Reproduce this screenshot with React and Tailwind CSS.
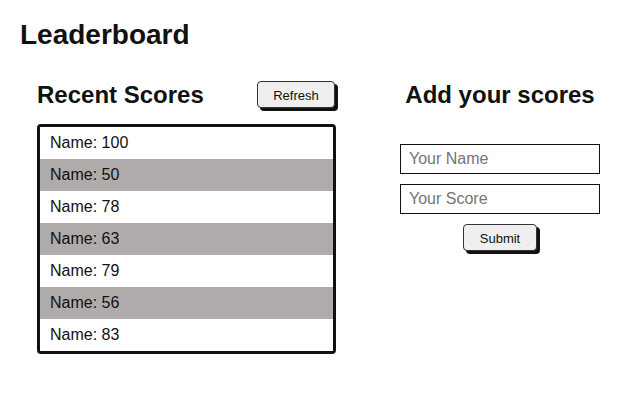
import React from 'react';

const scores = [
    { name: 'Name', score: 100 },
    { name: 'Name', score: 50 },
    { name: 'Name', score: 78 },
    { name: 'Name', score: 63 },
    { name: 'Name', score: 79 },
    { name: 'Name', score: 56 },
    { name: 'Name', score: 83 },
];

const App = () => {
    return (
        <div className="min-h-[415px] bg-white text-[#111] font-['Liberation_Sans',Arial,sans-serif] pl-5 pt-[19px]">
            <h1 className="text-[28px] leading-[32px] font-bold">Leaderboard</h1>
            <div className="flex mt-[30px] pl-[17px]">
                {/* recent scores */}
                <div className="w-[299px]">
                    <div className="flex items-start justify-between">
                        <h2 className="text-2xl leading-[28px] font-bold">Recent Scores</h2>
                        <button className="w-[78px] h-[27px] pt-[2px] mr-[1px] bg-[#efefef] border border-[#333] rounded-[4px] text-[13px] shadow-[3px_3px_0_#111]">
                            Refresh
                        </button>
                    </div>
                    <ul className="mt-[15px] border-[3px] border-[#111] rounded-[4px] overflow-hidden">
                        {scores.map((s, i) => (
                            <li
                                key={i}
                                className={`h-8 leading-8 pl-[10px] text-base ${i % 2 === 1 ? 'bg-[#b0abab]' : 'bg-white'}`}
                            >
                                {s.name}: {s.score}
                            </li>
                        ))}
                    </ul>
                </div>

                {/* add score form */}
                <div className="w-[200px] ml-[64px] flex flex-col items-center">
                    <h2 className="text-2xl leading-[28px] font-bold whitespace-nowrap">Add your scores</h2>
                    <input
                        type="text"
                        placeholder="Your Name"
                        className="mt-[35px] w-[200px] h-[30px] border border-[#111] px-[8px] text-base placeholder:text-[#757575] outline-none"
                    />
                    <input
                        type="text"
                        placeholder="Your Score"
                        className="mt-[10px] w-[200px] h-[30px] border border-[#111] px-[8px] text-base placeholder:text-[#757575] outline-none"
                    />
                    <button className="mt-[10px] w-[74px] h-[27px] pt-[2px] bg-[#efefef] border border-[#333] rounded-[4px] text-[13px] shadow-[3px_3px_0_#111]">
                        Submit
                    </button>
                </div>
            </div>
        </div>
    );
};

export default App;
